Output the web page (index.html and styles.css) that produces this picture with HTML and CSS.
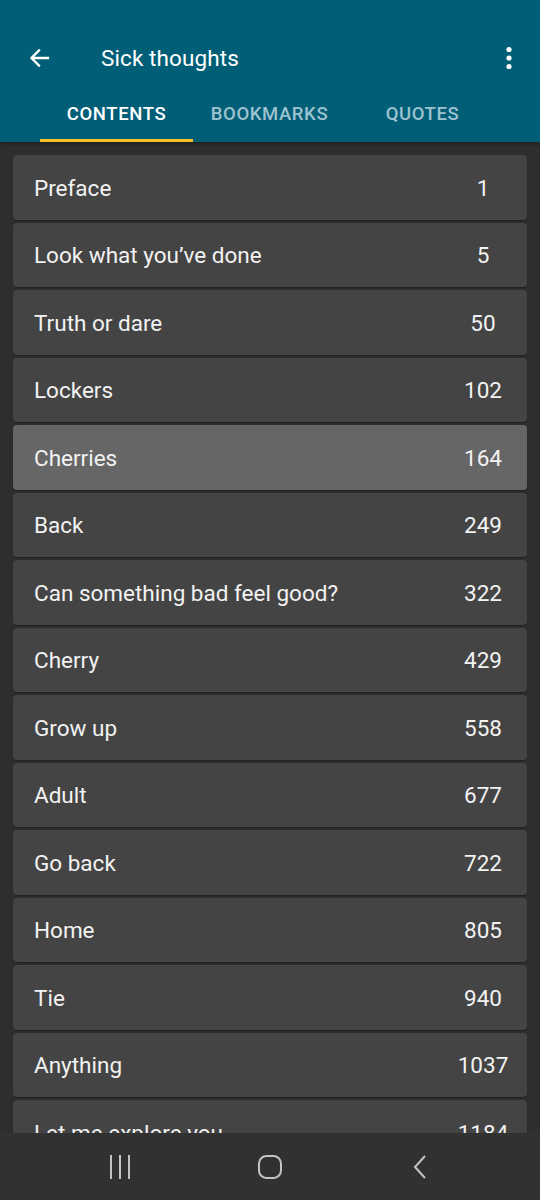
FILE: index.html
```html
<!DOCTYPE html>
<html>
<head>
<meta charset="utf-8">
<link rel="stylesheet" href="styles.css">
</head>
<body>
<div class="app">
  <header class="header">
    <div class="toolbar">
      <svg class="back" width="24" height="24" viewBox="0 0 24 24"><path d="M21 12H5M12 4.5l-7.5 7.5 7.5 7.5" fill="none" stroke="#fff" stroke-width="2.3" stroke-linecap="square"/></svg>
      <div class="title">Sick thoughts</div>
      <svg class="more" width="8" height="26" viewBox="0 0 8 26"><circle cx="4" cy="4.5" r="2.6" fill="#fff"/><circle cx="4" cy="13" r="2.6" fill="#fff"/><circle cx="4" cy="21.5" r="2.6" fill="#fff"/></svg>
    </div>
    <nav class="tabs">
      <div class="tab active">CONTENTS</div>
      <div class="tab">BOOKMARKS</div>
      <div class="tab">QUOTES</div>
    </nav>
  </header>
  <main class="list">
    <div class="card"><span class="name">Preface</span><span class="num">1</span></div>
    <div class="card"><span class="name">Look what you’ve done</span><span class="num">5</span></div>
    <div class="card"><span class="name">Truth or dare</span><span class="num">50</span></div>
    <div class="card"><span class="name">Lockers</span><span class="num">102</span></div>
    <div class="card selected"><span class="name">Cherries</span><span class="num">164</span></div>
    <div class="card"><span class="name">Back</span><span class="num">249</span></div>
    <div class="card"><span class="name">Can something bad feel good?</span><span class="num">322</span></div>
    <div class="card"><span class="name">Cherry</span><span class="num">429</span></div>
    <div class="card"><span class="name">Grow up</span><span class="num">558</span></div>
    <div class="card"><span class="name">Adult</span><span class="num">677</span></div>
    <div class="card"><span class="name">Go back</span><span class="num">722</span></div>
    <div class="card"><span class="name">Home</span><span class="num">805</span></div>
    <div class="card"><span class="name">Tie</span><span class="num">940</span></div>
    <div class="card"><span class="name">Anything</span><span class="num">1037</span></div>
    <div class="card"><span class="name">Let me explore you</span><span class="num">1184</span></div>
  </main>
  <footer class="navbar">
    <span class="nav-slot"><svg width="24" height="28" viewBox="0 0 24 28"><path d="M3 2v24M12 2v24M21 2v24" stroke="#c4c4c4" stroke-width="2"/></svg></span>
    <span class="nav-slot"><svg width="26" height="26" viewBox="0 0 26 26"><rect x="2" y="2" width="22" height="22" rx="7.5" fill="none" stroke="#c4c4c4" stroke-width="2"/></svg></span>
    <span class="nav-slot"><svg width="16" height="26" viewBox="0 0 16 26"><path d="M13 2L3 13l10 11" fill="none" stroke="#c4c4c4" stroke-width="2"/></svg></span>
  </footer>
</div>
</body>
</html>
```
FILE: styles.css
```css
* { box-sizing: border-box; }
html, body { margin: 0; padding: 0; }
body {
  font-family: Roboto, "Noto Sans", sans-serif;
  background: #2e2e2e;
  width: 540px;
  height: 1200px;
  overflow: hidden;
}
.app {
  display: flex;
  flex-direction: column;
  height: 1200px;
}
.header {
  background: #015e77;
  padding-top: 27px;
  flex: none;
  height: 142px;
  display: flex;
  flex-direction: column;
  box-shadow: 0 2px 4px rgba(0,0,0,0.35);
  position: relative;
  z-index: 1;
}
.toolbar {
  height: 62px;
  display: flex;
  align-items: center;
  padding: 0 0 0 27px;
}
.back { flex: none; }
.title {
  color: #fff;
  font-size: 22.5px;
  margin-left: 50px;
  flex: 1;
  letter-spacing: 0.1px;
}
.more { margin-right: 27px; }
.tabs {
  display: flex;
  height: 53px;
  padding-left: 40px;
}
.tab {
  width: 153px;
  font-size: 18.5px;
  font-weight: 500;
  color: #9ec3d0;
  display: flex;
  align-items: center;
  justify-content: center;
  height: 100%;
  padding-bottom: 3px;
  letter-spacing: 0.6px;
}
.tab.active {
  color: #fff;
  border-bottom: 3px solid #f4c025;
  padding-bottom: 0;
}
.list {
  flex: 1;
  overflow: hidden;
  padding: 13px 13px 0 13px;
  display: flex;
  flex-direction: column;
  gap: 3px;
}
.card {
  flex: none;
  height: 64.5px;
  background: #444444;
  border-radius: 4px;
  display: flex;
  align-items: center;
  padding-left: 21px;
  padding-top: 1px;
  color: #f2f2f2;
  font-size: 22.5px;
  box-shadow: 0 1px 1px rgba(0,0,0,0.3);
}
.card.selected { background: #666666; }
.name { flex: 1; }
.num {
  width: 70px;
  margin-right: 9px;
  text-align: center;
}
.navbar {
  flex: none;
  height: 67px;
  background: #313131;
  display: grid;
  grid-template-columns: 150px 150px 150px;
  padding-left: 45px;
  align-items: center;
}
.nav-slot {
  display: flex;
  justify-content: center;
  align-items: center;
}
```
